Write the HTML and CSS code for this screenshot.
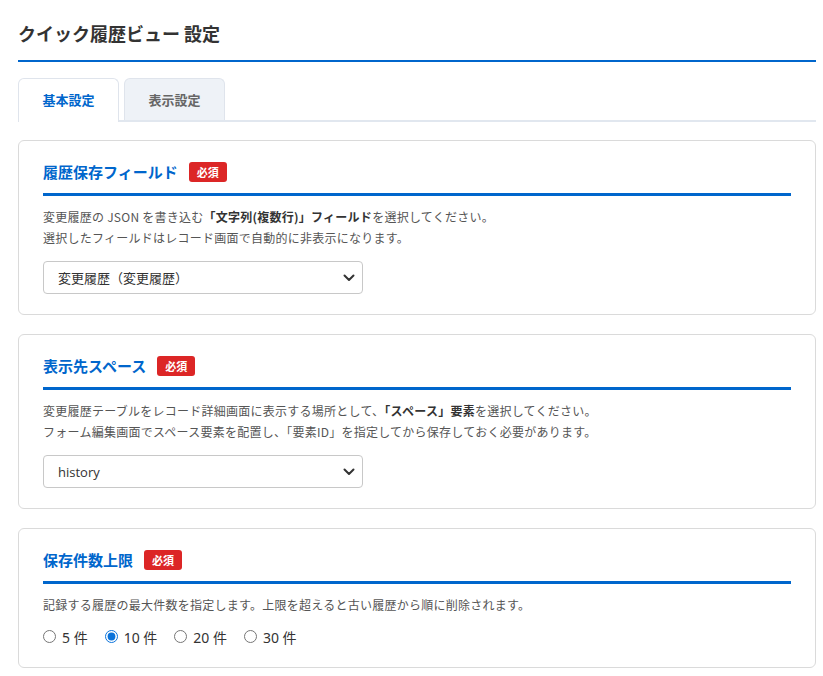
FILE: index.html
```html
<!DOCTYPE html>
<html>
<head>
    <meta charset="utf-8">
    <title>クイック履歴ビュー 設定</title>
    <link rel="stylesheet" href="styles.css">
</head>
<body>
    <div class="settings-page">
        <h1 class="page-title">クイック履歴ビュー 設定</h1>

        <div class="tabs">
            <button class="tab active">基本設定</button>
            <button class="tab">表示設定</button>
        </div>

        <!-- 履歴保存フィールド -->
        <div class="setting-card">
            <div class="card-heading">
                <h2>履歴保存フィールド</h2>
                <span class="required-badge">必須</span>
            </div>
            <p class="card-desc">
                変更履歴の JSON を書き込む<strong>「文字列(複数行)」フィールド</strong>を選択してください。<br>
                選択したフィールドはレコード画面で自動的に非表示になります。
            </p>
            <div class="select-wrap">
                <select class="field-select">
                    <option>変更履歴（変更履歴）</option>
                </select>
                <svg class="select-arrow" width="12" height="8" viewBox="0 0 12 8"><path d="M1.5 1.5 L6 6 L10.5 1.5" fill="none" stroke="#333" stroke-width="2" stroke-linecap="round" stroke-linejoin="round"/></svg>
            </div>
        </div>

        <!-- 表示先スペース -->
        <div class="setting-card">
            <div class="card-heading">
                <h2>表示先スペース</h2>
                <span class="required-badge">必須</span>
            </div>
            <p class="card-desc">
                変更履歴テーブルをレコード詳細画面に表示する場所として、<strong>「スペース」要素</strong>を選択してください。<br>
                フォーム編集画面でスペース要素を配置し、「要素ID」を指定してから保存しておく必要があります。
            </p>
            <div class="select-wrap">
                <select class="field-select latin">
                    <option>history</option>
                </select>
                <svg class="select-arrow" width="12" height="8" viewBox="0 0 12 8"><path d="M1.5 1.5 L6 6 L10.5 1.5" fill="none" stroke="#333" stroke-width="2" stroke-linecap="round" stroke-linejoin="round"/></svg>
            </div>
        </div>

        <!-- 保存件数上限 -->
        <div class="setting-card">
            <div class="card-heading">
                <h2>保存件数上限</h2>
                <span class="required-badge">必須</span>
            </div>
            <p class="card-desc">記録する履歴の最大件数を指定します。上限を超えると古い履歴から順に削除されます。</p>
            <div class="radio-row">
                <label class="radio-item"><input type="radio" name="limit"> 5 件</label>
                <label class="radio-item"><input type="radio" name="limit" checked> 10 件</label>
                <label class="radio-item"><input type="radio" name="limit"> 20 件</label>
                <label class="radio-item"><input type="radio" name="limit"> 30 件</label>
            </div>
        </div>
    </div>
</body>
</html>
```

FILE: styles.css
```css
* {
    margin: 0;
    padding: 0;
    box-sizing: border-box;
}

body {
    background: #fff;
    color: #333;
    font-family: "Noto Sans", "Noto Sans CJK JP", sans-serif;
}

.settings-page {
    padding: 20px 7px 20px 18px;
}

.page-title {
    font-family: "Noto Sans CJK JP", sans-serif;
    font-size: 18px;
    font-weight: 700;
    line-height: 26px;
    color: #333;
    padding-bottom: 14px;
    border-bottom: 2px solid #0066cc;
}

.tabs {
    display: flex;
    gap: 5px;
    margin-top: 16px;
    border-bottom: 2px solid #e1e7ef;
}

.tab {
    width: 101px;
    height: 42px;
    margin-bottom: -2px;
    border: 1px solid #dfe4ec;
    border-bottom: none;
    border-radius: 6px 6px 0 0;
    background: #eef2f7;
    color: #666;
    font-family: "Noto Sans CJK JP", sans-serif;
    font-size: 13px;
    font-weight: 700;
}

.tab.active {
    background: #fff;
    color: #0066cc;
    height: 44px;
    padding-bottom: 2px;
}

.setting-card {
    margin-top: 18px;
    padding: 20px 24px 20px 24px;
    border: 1px solid #dadada;
    border-radius: 6px;
}

.setting-card + .setting-card {
    margin-top: 19px;
}

.card-heading {
    display: flex;
    align-items: center;
    gap: 11px;
    padding-bottom: 10px;
    border-bottom: 3px solid #0066cc;
}

.card-heading h2 {
    font-family: "Noto Sans CJK JP", sans-serif;
    font-size: 15px;
    font-weight: 700;
    line-height: 22px;
    color: #0066cc;
}

.required-badge {
    display: inline-block;
    background: #dc2626;
    color: #fff;
    font-family: "Noto Sans CJK JP", sans-serif;
    font-size: 11px;
    font-weight: 700;
    line-height: 20px;
    padding: 0 8px;
    border-radius: 3px;
}

.card-desc {
    margin-top: 10px;
    font-family: "Noto Sans CJK JP", sans-serif;
    font-size: 12px;
    line-height: 21px;
    letter-spacing: 0.25px;
    color: #555;
}

.card-desc strong {
    color: #333;
}

.select-wrap {
    position: relative;
    width: 320px;
    margin-top: 13px;
}

.field-select {
    appearance: none;
    -webkit-appearance: none;
    width: 100%;
    height: 33px;
    padding: 0 30px 0 14px;
    border: 1px solid #c8c8c8;
    border-radius: 4px;
    background: #fff;
    color: #333;
    font-family: "Noto Sans CJK JP", sans-serif;
    font-size: 13px;
}

.field-select.latin {
    font-family: "Open Sans", "Noto Sans CJK JP", sans-serif;
}

.select-arrow {
    position: absolute;
    right: 8px;
    top: 13px;
    pointer-events: none;
}

.radio-row {
    display: flex;
    gap: 17px;
    margin-top: 11px;
    height: 21px;
    align-items: center;
}

.radio-item {
    display: flex;
    align-items: center;
    gap: 6px;
    font-family: "Noto Sans", "Noto Sans CJK JP", sans-serif;
    font-size: 14px;
    color: #333;
}

.radio-item input {
    width: 13px;
    height: 13px;
    margin: 0;
    accent-color: #0b73da;
}
```
